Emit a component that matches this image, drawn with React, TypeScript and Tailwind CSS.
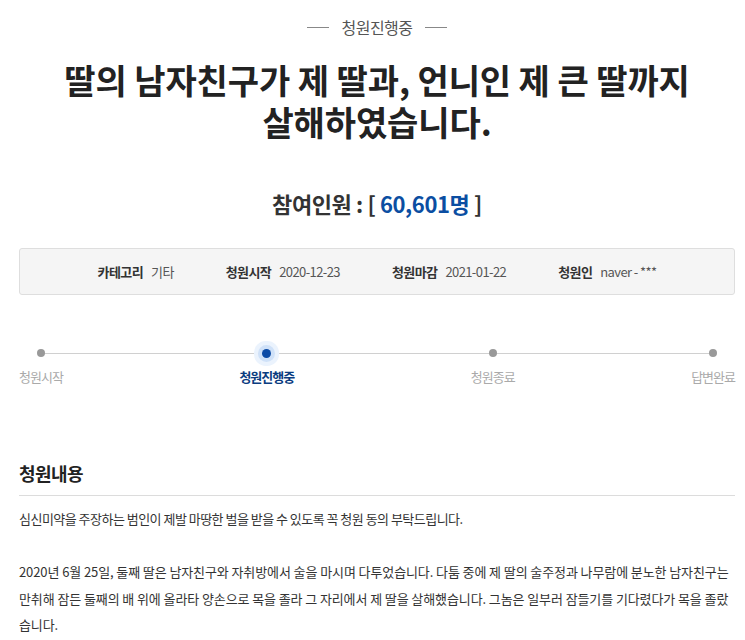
import React from 'react';

const font = { fontFamily: '"Noto Sans CJK KR", "Noto Sans", sans-serif' };

const infoItems = [
  { label: '카테고리', value: '기타' },
  { label: '청원시작', value: '2020-12-23' },
  { label: '청원마감', value: '2021-01-22' },
  { label: '청원인', value: 'naver - ***' },
];

const steps = [
  { label: '청원시작', active: false },
  { label: '청원진행중', active: true },
  { label: '청원종료', active: false },
  { label: '답변완료', active: false },
];

// lines broken the same way as the source page (word-break: break-all at its width)
const storyLines = [
  '2020년 6월 25일, 둘째 딸은 남자친구와 자취방에서 술을 마시며 다투었습니다. 다툼 중에 제 딸의 술주정과 나무람에 분노한 남자친구는',
  '만취해 잠든 둘째의 배 위에 올라타 양손으로 목을 졸라 그 자리에서 제 딸을 살해했습니다. 그놈은 일부러 잠들기를 기다렸다가 목을 졸랐',
  '습니다.',
];

export default function App() {
  return (
    <div className="w-[745px] h-[640px] overflow-hidden bg-white text-[#333]" style={font}>
      <div className="ml-[19px] mr-[10px] pt-[15px]">
        {/* status tag */}
        <div className="flex items-center justify-center gap-[12px] h-[24px] text-[16px] text-[#555] tracking-[-0.5px]">
          <span className="w-[22px] h-px bg-[#888]"></span>
          <span>청원진행중</span>
          <span className="w-[22px] h-px bg-[#888]"></span>
        </div>

        {/* title */}
        <h1 className="mt-[20px] text-center text-[34px] leading-[42px] font-bold text-[#222] tracking-[-0.1px]">
          <span className="block">딸의 남자친구가 제 딸과, 언니인 제 큰 딸까지</span>
          <span className="block">살해하였습니다.</span>
        </h1>

        {/* count */}
        <div className="mt-[45px] text-center text-[22px] leading-[30px] font-bold text-[#333] tracking-[-0.4px]">
          참여인원 : [ <span className="text-[#0b4ea2]">60,601명</span> ]
        </div>

        {/* info box */}
        <div className="mt-[30px] h-[47px] flex items-center justify-center gap-[52px] bg-[#f5f5f5] border border-[#dedede] rounded-[3px] text-[13px] tracking-[-0.6px]">
          {infoItems.map((item) => (
            <div key={item.label} className="flex items-center gap-[8px]">
              <span className="font-bold text-[#333]">{item.label}</span>
              <span className="text-[#555]">{item.value}</span>
            </div>
          ))}
        </div>

        {/* progress */}
        <div className="relative mt-[48px] flex justify-between">
          <div className="absolute left-[23px] right-[23px] top-[10px] h-px bg-[#d0d0d0]"></div>
          {steps.map((step) => (
            <div key={step.label} className="relative flex flex-col items-center">
              <div className="h-[20px] flex items-center justify-center">
                {step.active ? (
                  <span className="w-[9px] h-[9px] rounded-full bg-[#0a4aa6] shadow-[0_0_0_4px_#cfe1f8,0_0_0_8px_#ebf3fd]"></span>
                ) : (
                  <span className="w-[8px] h-[8px] rounded-full bg-[#999]"></span>
                )}
              </div>
              <span
                className={`mt-[4px] text-[13px] leading-[20px] tracking-[-1px] ${
                  step.active ? 'font-bold text-[#0b3c80]' : 'text-[#aaa]'
                }`}
              >
                {step.label}
              </span>
            </div>
          ))}
        </div>

        {/* content */}
        <h2 className="mt-[72px] pb-[8px] border-b border-[#dcdcdc] text-[18px] leading-[28px] font-bold text-[#222] tracking-[-0.6px]">
          청원내용
        </h2>
        <div className="mt-[10px] text-[13px] leading-[26.5px] text-[#333]">
          <p className="tracking-[-0.52px]">
            심신미약을 주장하는 범인이 제발 마땅한 벌을 받을 수 있도록 꼭 청원 동의 부탁드립니다.
          </p>
          <br />
          <p className="tracking-[-0.1px] whitespace-nowrap">
            {storyLines.map((line) => (
              <span key={line} className="block">
                {line}
              </span>
            ))}
          </p>
        </div>
      </div>
    </div>
  );
}
